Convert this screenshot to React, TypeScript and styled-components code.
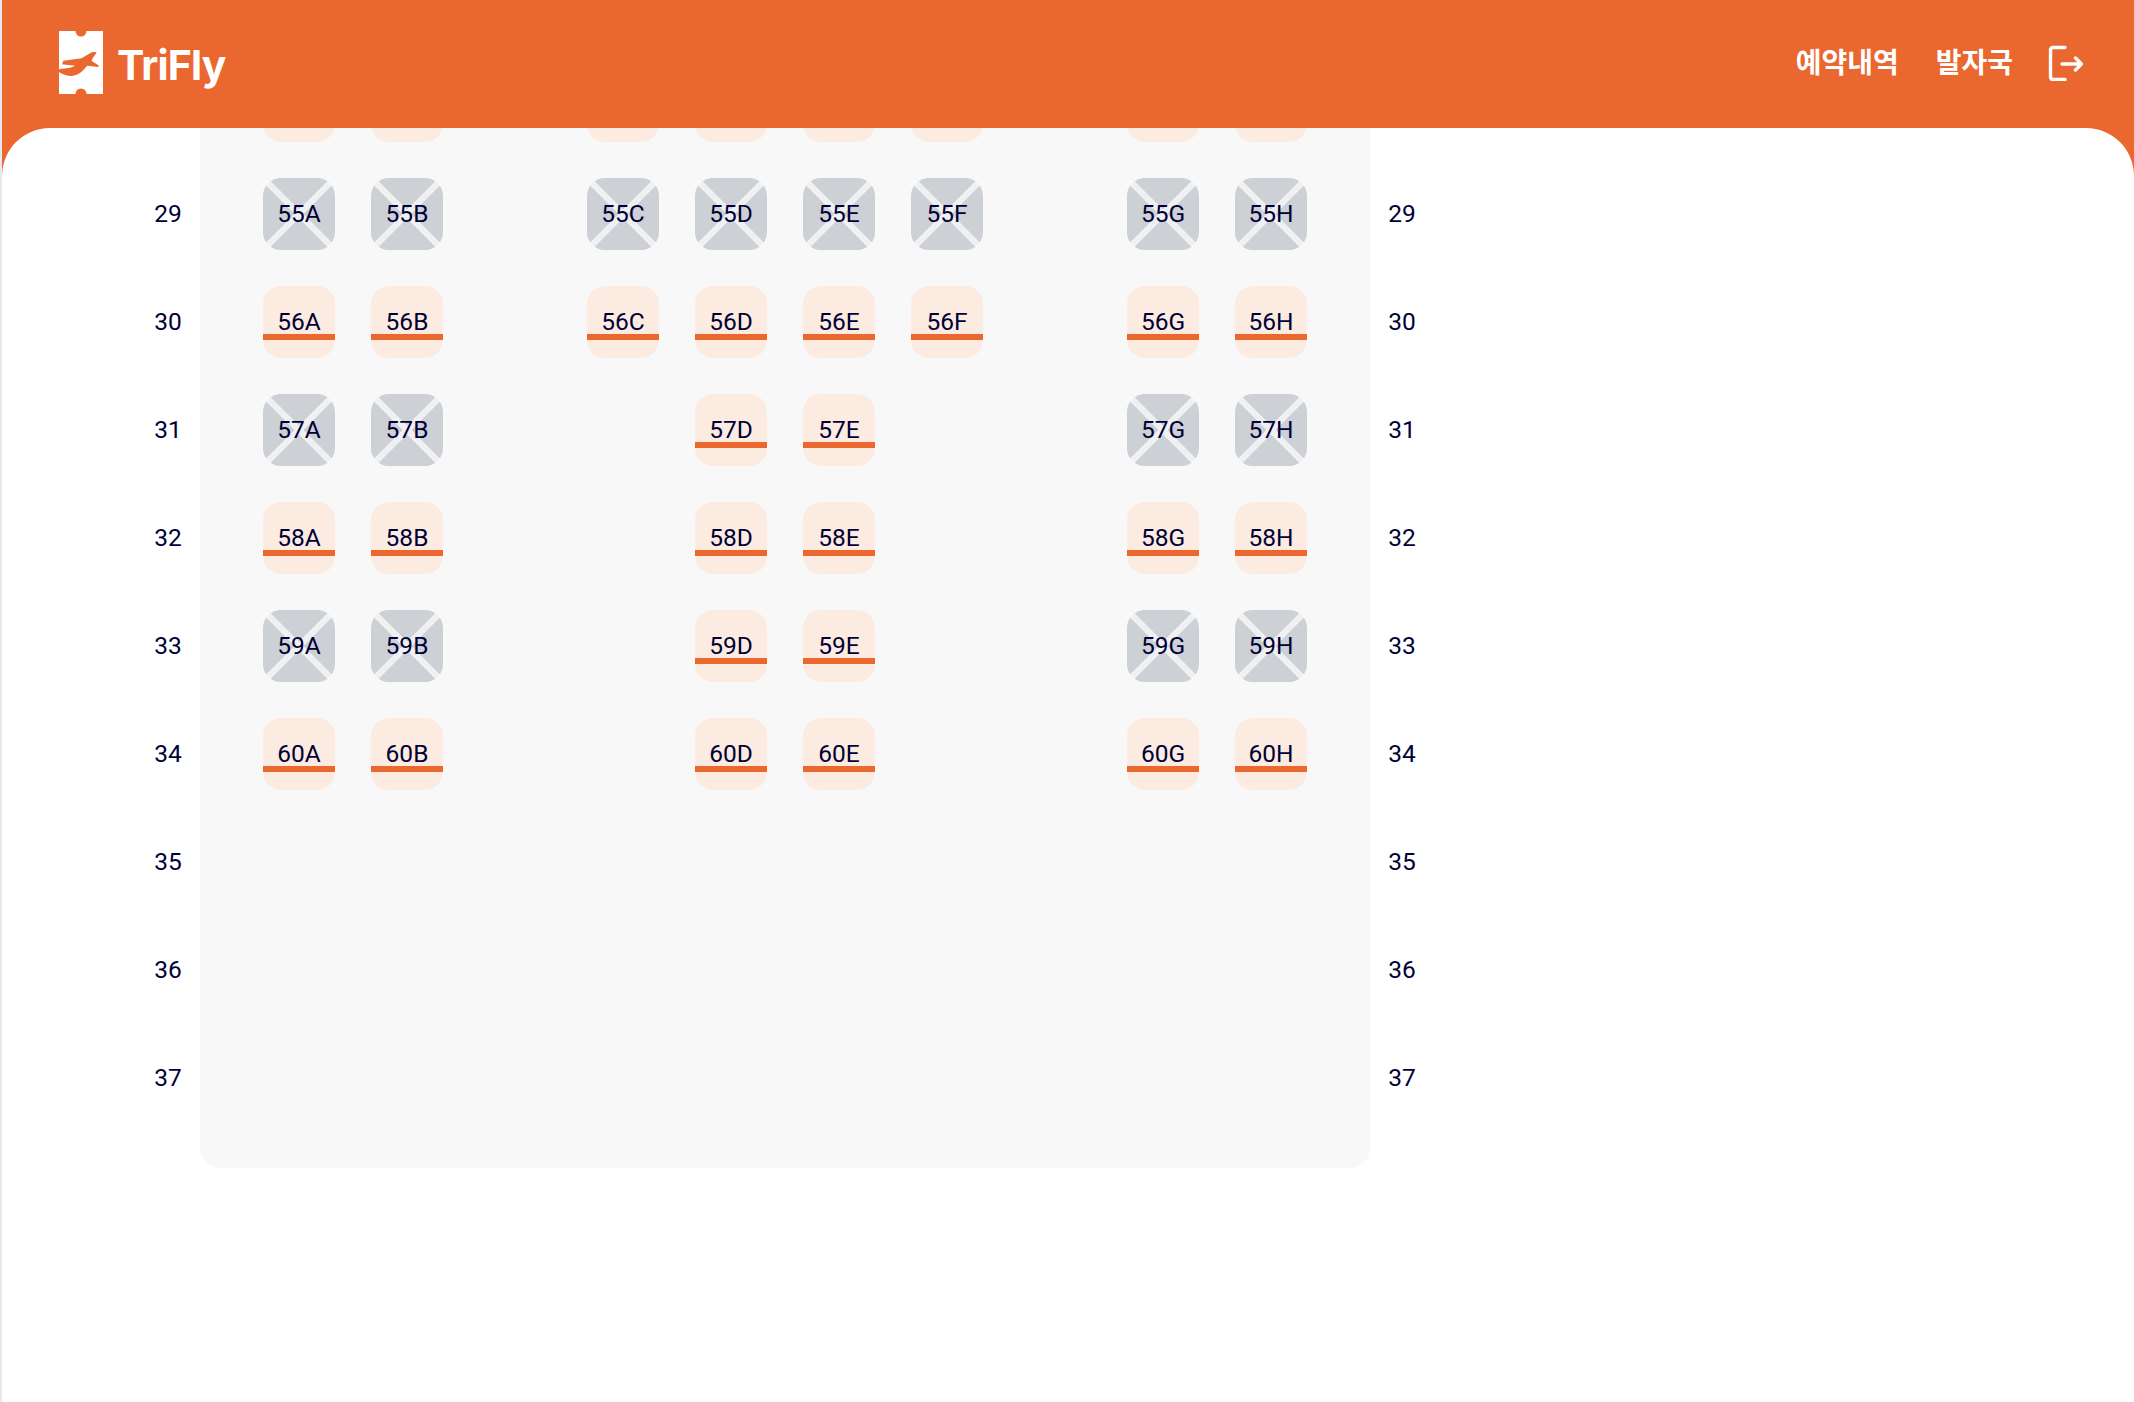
import React from 'react'
import styled, { createGlobalStyle } from 'styled-components'

const ORANGE = '#eb6730'
const INK = '#000036'

const GlobalStyle = createGlobalStyle`
  html, body {
    margin: 0;
    padding: 0;
    background: #fff;
  }
  * {
    box-sizing: border-box;
  }
`
const Page = styled.div`
  display: flex;
  flex-direction: column;
  height: 1402px;
  overflow: hidden;
  border-left: 2px solid #e5e8ee;
  background: ${ORANGE};
  font-family: Roboto, 'Noto Sans CJK KR', sans-serif;
`
const Header = styled.header`
  display: flex;
  flex: none;
  justify-content: space-between;
  align-items: center;
  height: 128px;
  padding: 0 51px 0 55px;
`
const Logo = styled.div`
  display: flex;
  align-items: center;
  gap: 12px;
  margin-top: -2px;
  svg {
    display: block;
  }
`
const LogoText = styled.span`
  color: #fff;
  font-family: Inter, sans-serif;
  font-size: 41px;
  font-weight: 700;
  line-height: 1;
  letter-spacing: -0.8px;
  margin-top: 4px;
`
const Nav = styled.nav`
  display: flex;
  align-items: center;
  gap: 34px;
`
const NavLinks = styled.div`
  display: flex;
  align-items: center;
  gap: 37px;
  margin-top: -7px;
`
const NavLink = styled.a`
  color: #fff;
  font-family: 'Noto Sans CJK KR', sans-serif;
  font-size: 28px;
  font-weight: 700;
  line-height: 1;
`
const LogoutSvg = styled.svg`
  display: block;
  margin-top: -3px;
`
const Main = styled.main`
  flex: 1;
  overflow: hidden;
  background: #fff;
  border-radius: 48px 48px 0 0;
`
const Board = styled.div`
  display: flex;
  align-items: stretch;
  width: fit-content;
  margin: -58px 0 0 134px;
`
const RowNumbers = styled.div`
  display: grid;
  grid-auto-rows: 72px;
  row-gap: 36px;
  width: 64px;
`
const RowNumber = styled.div`
  display: flex;
  justify-content: center;
  align-items: center;
  padding-bottom: 2px;
  color: ${INK};
  font-size: 24.5px;
`
const Cabin = styled.div`
  display: grid;
  grid-template-columns: repeat(10, 72px);
  grid-auto-rows: 72px;
  gap: 36px;
  padding: 0 63px 54px;
  background: #f8f8f8;
  border-radius: 0 0 20px 20px;
`
const Aisle = styled.div``
const Seat = styled.div<{ $taken: boolean }>`
  position: relative;
  display: flex;
  justify-content: center;
  align-items: center;
  overflow: hidden;
  padding-bottom: 2px;
  border-radius: 18px;
  color: ${INK};
  font-size: 24.5px;
  background: ${(p) =>
    p.$taken
      ? `linear-gradient(45deg, transparent calc(50% - 3.5px), #eff0f2 calc(50% - 3.5px), #eff0f2 calc(50% + 3.5px), transparent calc(50% + 3.5px)),
         linear-gradient(-45deg, transparent calc(50% - 3.5px), #eff0f2 calc(50% - 3.5px), #eff0f2 calc(50% + 3.5px), transparent calc(50% + 3.5px)),
         #cdd0d4`
      : '#fcebe0'};
  &::after {
    content: '';
    display: ${(p) => (p.$taken ? 'none' : 'block')};
    position: absolute;
    left: 0;
    right: 0;
    top: 48px;
    height: 6px;
    background: ${ORANGE};
  }
`

const WIDE = ['A', 'B', '', 'C', 'D', 'E', 'F', '', 'G', 'H']
const NARROW = ['A', 'B', '', '', 'D', 'E', '', '', 'G', 'H']

const rows = [
  { no: 28, seat: 54, columns: WIDE, taken: '' },
  { no: 29, seat: 55, columns: WIDE, taken: 'ABCDEFGH' },
  { no: 30, seat: 56, columns: WIDE, taken: '' },
  { no: 31, seat: 57, columns: NARROW, taken: 'ABGH' },
  { no: 32, seat: 58, columns: NARROW, taken: '' },
  { no: 33, seat: 59, columns: NARROW, taken: 'ABGH' },
  { no: 34, seat: 60, columns: NARROW, taken: '' },
  { no: 35, seat: 0, columns: [], taken: '' },
  { no: 36, seat: 0, columns: [], taken: '' },
  { no: 37, seat: 0, columns: [], taken: '' },
]

function TicketLogo() {
  return (
    <svg width="48" height="64" viewBox="0 0 48 64">
      <path
        d="M2 0H18.5A5.5 5.5 0 0 0 29.5 0H46V63H29.5A5.5 5.5 0 0 0 18.5 63H2Z"
        fill="#fff"
      />
      <path
        d="M39.7 21.3C37 20.6 35 21.2 33 22.3C30 23.8 27.4 25.6 24.7 27.3L6.3 29.7L5 33.3L18 34.7C15.5 36 12.5 37 9.7 37.3C6.5 37.6 3.5 38 0.3 39C2 41 4 42.6 6.3 43.3C9.6 44.6 13 45.2 16.3 44.7C19.5 44 22.3 42.6 24.7 40.7L30.3 34.7L41.3 36L41.8 34.6L34.7 30C35 28.6 35.4 27.4 36.3 26.3C37.6 24.8 38.8 23 39.7 21.3Z"
        fill={ORANGE}
      />
    </svg>
  )
}

function LogoutIcon() {
  return (
    <LogoutSvg width="36" height="36" viewBox="0 0 36 36" fill="none" stroke="#fff" strokeWidth="3.4" strokeLinecap="round" strokeLinejoin="round">
      <path d="M18 2.5H6a2.5 2.5 0 0 0-2.5 2.5V32a2.5 2.5 0 0 0 2.5 2.5H18" />
      <path d="M15 19H34.5M28.5 13L34.5 19L28.5 25" />
    </LogoutSvg>
  )
}

export default function App() {
  const numbers = rows.map((row) => <RowNumber key={row.no}>{row.no}</RowNumber>)

  return (
    <Page>
      <GlobalStyle />
      <Header>
        <Logo>
          <TicketLogo />
          <LogoText>TriFly</LogoText>
        </Logo>
        <Nav>
          <NavLinks>
            <NavLink>예약내역</NavLink>
            <NavLink>발자국</NavLink>
          </NavLinks>
          <LogoutIcon />
        </Nav>
      </Header>
      <Main>
        <Board>
          <RowNumbers>{numbers}</RowNumbers>
          <Cabin>
            {rows.map((row) =>
              row.columns.length === 0 ? (
                <React.Fragment key={row.no}>
                  {WIDE.map((_, i) => (
                    <Aisle key={i} />
                  ))}
                </React.Fragment>
              ) : (
                row.columns.map((letter, i) =>
                  letter ? (
                    <Seat key={row.no + letter} $taken={row.taken.includes(letter)}>
                      {row.seat + letter}
                    </Seat>
                  ) : (
                    <Aisle key={row.no + '-' + i} />
                  ),
                )
              ),
            )}
          </Cabin>
          <RowNumbers>{numbers}</RowNumbers>
        </Board>
      </Main>
    </Page>
  )
}
